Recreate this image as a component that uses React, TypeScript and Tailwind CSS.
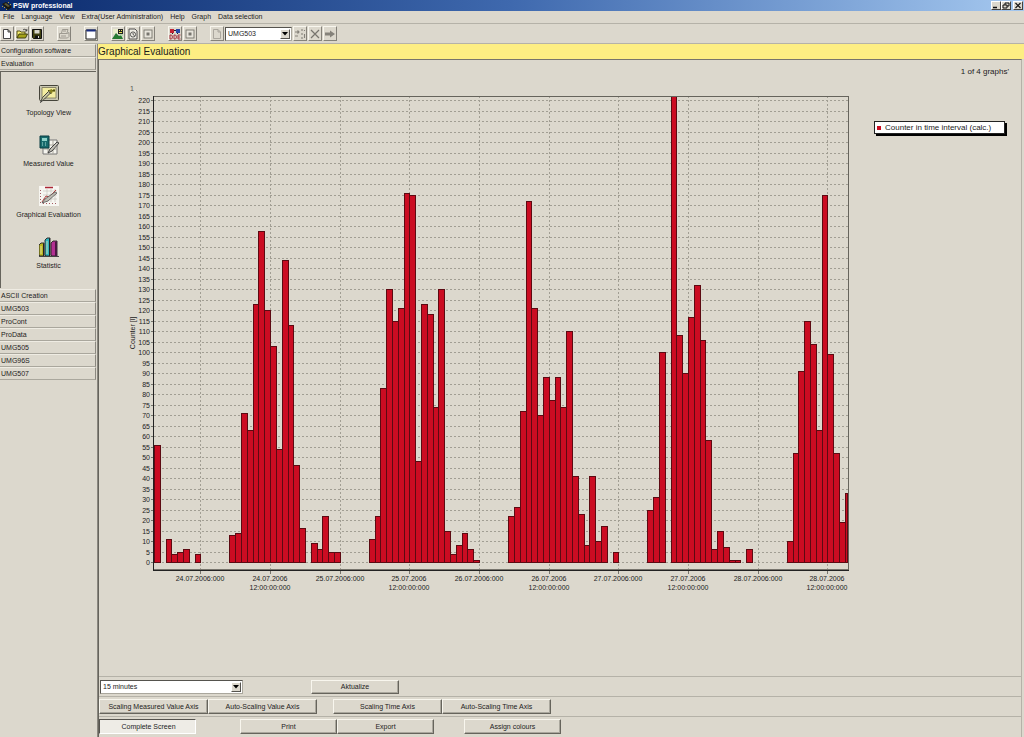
import type { ReactNode } from "react";
import clsx from "clsx";

const menu = ["File", "Language", "View", "Extra(User Administration)", "Help", "Graph", "Data selection"];

const modules = ["ASCII Creation", "UMG503", "ProCont", "ProData", "UMG505", "UMG96S", "UMG507"];

// one value per hour, starting 23.07.2006 16:00
const hourly = [
  56, 0, 11, 4, 5, 6, 0, 4, 0, 0, 0, 0, 0, 13, 14, 71, 63, 123, 158, 120, 103, 54, 144, 113, 46, 16, 0, 9, 6, 22, 5, 5,
  0, 0, 0, 0, 0, 11, 22, 83, 130, 115, 121, 176, 175, 48, 123, 118, 74, 130, 15, 4, 8, 14, 6, 1,
  0, 0, 0, 0, 0, 22, 26, 72, 172, 121, 70, 88, 77, 88, 74, 110, 41, 23, 8, 41, 10, 17, 0, 5,
  0, 0, 0, 0, 0, 25, 31, 100, 0, 222, 108, 90, 117, 132, 106, 58, 6, 15, 7, 1, 1, 0, 6, 0,
  0, 0, 0, 0, 0, 10, 52, 91, 115, 104, 63, 175, 99, 52, 19, 33,
];

const timeTicks = [
  ["24.07.2006:000"],
  ["24.07.2006", "12:00:00:000"],
  ["25.07.2006:000"],
  ["25.07.2006", "12:00:00:000"],
  ["26.07.2006:000"],
  ["26.07.2006", "12:00:00:000"],
  ["27.07.2006:000"],
  ["27.07.2006", "12:00:00:000"],
  ["28.07.2006:000"],
  ["28.07.2006", "12:00:00:000"],
];

const PLOT = { left: 55, right: 749, top: 27, bottom: 501, zero: 493 };
const HOUR = 5.805;

const xAt = (hour: number) => Math.round(PLOT.left + hour * HOUR);
const yAt = (value: number) => Math.round(PLOT.zero - value * 2.098);

function Chart() {
  const steps = Array.from({ length: 45 }, (_, i) => i * 5);

  return (
    <svg viewBox="0 0 760 540" className="block min-w-0 flex-1 self-start" role="img" aria-label="Counter in time interval">
      <g shapeRendering="crispEdges" stroke="#a19e93" strokeDasharray="2 2">
        {steps.map((v) => (
          <line key={v} x1={PLOT.left} x2={PLOT.right} y1={yAt(v) + 0.5} y2={yAt(v) + 0.5} />
        ))}
        {timeTicks.map((_, i) => (
          <line key={i} x1={xAt(8 + i * 12) + 0.5} x2={xAt(8 + i * 12) + 0.5} y1={PLOT.top} y2={PLOT.bottom} />
        ))}
      </g>
      <g shapeRendering="crispEdges" fill="#cb0c22" stroke="#5c0a12">
        {hourly.map((v, i) => {
          if (!v) return null;
          const x = xAt(i);
          const y = yAt(v);
          const right = Math.min(xAt(i + 1), PLOT.right - 1);
          return <rect key={i} x={x + 0.5} y={y + 0.5} width={right - x} height={PLOT.zero - y} />;
        })}
      </g>
      <g shapeRendering="crispEdges" fill="none">
        <path d={`M${PLOT.left} ${PLOT.top + 0.5}H${PLOT.right + 0.5}V${PLOT.bottom}`} stroke="#66645c" />
        <path d={`M${PLOT.left - 0.5} ${PLOT.top}V${PLOT.bottom + 0.5}H${PLOT.right + 1}`} stroke="#222" />
        <path d={`M${PLOT.left} ${PLOT.bottom - 0.5}H${PLOT.right}`} stroke="#77746c" />
        {steps.map((v) => (
          <path key={v} d={`M${PLOT.left - 3} ${yAt(v) + 0.5}h2`} stroke="#77746c" />
        ))}
        {timeTicks.map((_, i) => (
          <path key={i} d={`M${xAt(8 + i * 12) + 0.5} ${PLOT.bottom + 1}v3`} stroke="#77746c" />
        ))}
      </g>
      <g className="text-[7px]" fill="#222">
        {steps.map((v) => (
          <text key={v} x={51} y={yAt(v) + 3} textAnchor="end">
            {v}
          </text>
        ))}
        {timeTicks.map((lines, i) =>
          lines.map((line, n) => (
            <text key={line} x={xAt(8 + i * 12)} y={512 + n * 9} textAnchor="middle">
              {line}
            </text>
          ))
        )}
        <text x={31} y={22} fill="#55534e">
          1
        </text>
        <text transform="translate(36 264) rotate(-90)" textAnchor="middle">
          Counter [l]
        </text>
      </g>
    </svg>
  );
}

function Glyph({ children }: { children: ReactNode }) {
  return (
    <svg viewBox="0 0 12 12" className="h-3 w-3" fill="none" aria-hidden="true">
      {children}
    </svg>
  );
}

function Tool({ label, children }: { label: string; children: ReactNode }) {
  return (
    <button
      type="button"
      aria-label={label}
      className="flex h-[15px] w-[14px] items-center justify-center border border-t-[#f8f6ee] border-r-[#85827a] border-b-[#85827a] border-l-[#f8f6ee]"
    >
      <Glyph>{children}</Glyph>
    </button>
  );
}

const pageShape = <path d="M2.500 1.500h4.500l2.500 2.500v6.500h-7zM7 1.500V4h2.500" fill="#fff" stroke="#333" strokeWidth=".9" />;
const greyPage = <path d="M2.500 1.500h4.500l2.500 2.500v6.500h-7zM7 1.500V4h2.500" stroke="#a5a299" strokeWidth=".9" />;
const stopShape = (
  <>
    <rect x="2" y="2" width="8" height="8" fill="#e7e4db" stroke="#77756e" strokeWidth=".9" />
    <rect x="4.500" y="4.500" width="3" height="3" fill="#77756e" />
  </>
);

function Toolbar() {
  return (
    <div className="flex h-[21px] items-center gap-[13px] border-t border-b border-t-[#b5b2a8] border-b-[#b5b2a8]">
      <div className="flex gap-px">
        <Tool label="New">{pageShape}</Tool>
        <Tool label="Open">
          <path d="M1 10V3h3l1 1h4v2" fill="#f4ec70" stroke="#45440c" strokeWidth=".9" />
          <path d="M1 10l2-4h8.500l-2 4z" fill="#a5a31b" stroke="#34340a" strokeWidth=".9" />
          <path d="M7 2c1-1 2.500-1 3.500.5M10.800 1v2H9" stroke="#222" strokeWidth=".8" />
        </Tool>
        <Tool label="Save">
          <path d="M1.500 1.500h9v9h-8l-1-1z" fill="#3f400f" stroke="#111" />
          <path d="M3.500 2h5v3.500h-5z" fill="#d8d6cc" />
          <path d="M4 7.500h4.500V10H4z" fill="#111" />
          <path d="M7 8h1v2H7z" fill="#ddd" />
        </Tool>
      </div>
      <Tool label="Print">
        <path d="M3.500 5l1-3.500H10L9 5M1.500 5.500h8l1.500-1v4L9.500 10h-8zM3 8h5M5 3h3" stroke="#96938a" strokeWidth=".9" />
      </Tool>
      <Tool label="Window">
        <path d="M1 2h10v9H1z" fill="#fff" stroke="#222" />
        <path d="M1.500 1.500h9v2h-9z" fill="#1a2d80" />
      </Tool>
      <div className="flex gap-px">
        <Tool label="Topology">
          <path d="M1 1h5v5H1z" fill="#e9eccb" />
          <path d="M6 1h5v5H6z" fill="#222" />
          <path d="M7 2h1v1H7zM9 2h1v1H9zM7 4h3v1H7z" fill="#e8e45a" />
          <path d="M0 11l4-6 3 3 2-1 2 4z" fill="#257a31" />
          <path d="M7 6h4v2H9z" fill="#b9d6b0" />
        </Tool>
        <Tool label="Schedule">
          <path d="M2 1h6l2 2v8H2z" fill="#eeece4" stroke="#444" strokeWidth=".9" />
          <circle cx="6" cy="6.500" r="2.600" stroke="#333" strokeWidth=".8" />
          <path d="M6 5v1.500l1.500 1" stroke="#333" strokeWidth=".8" />
        </Tool>
        <Tool label="Stop">{stopShape}</Tool>
      </div>
      <div className="flex gap-px">
        <Tool label="DDE">
          <path d="M1 1h4v4H1z" fill="#c32335" />
          <path d="M7 1h4v4H7z" fill="#2a48a8" />
          <path d="M5 2h2v1H5zM3 5h1v1H3zM8 5h1v1H8z" fill="#222" />
          <path d="M1 7v4h1.500l.8-1V8l-.8-1zM5 7v4h1.500l.8-1V8l-.8-1zM11.500 7H9v4h2.500M9 9h2" stroke="#a12030" strokeWidth=".9" />
        </Tool>
        <Tool label="Stop DDE">{stopShape}</Tool>
      </div>
      <div className="flex items-center gap-px">
        <Tool label="Page">{greyPage}</Tool>
        <Dropdown label="Device" value="UMG503" className="w-[67px]" />
        <Tool label="Transfer">
          <path d="M1 4h4M3.500 2.500L5 4 3.500 5.500M1 8h3M8 1v2M8 5v2M8 9v2M10.500 2v1M10.500 6v4" stroke="#85827a" strokeWidth="1.100" />
        </Tool>
        <Tool label="Cancel">
          <path d="M2 2l8 8M10 2l-8 8" stroke="#77756e" strokeWidth="1.200" />
        </Tool>
        <Tool label="Forward">
          <path d="M1 4.500h5V2.500L11 6 6 9.500v-2H1z" fill="#85827a" />
        </Tool>
      </div>
    </div>
  );
}

function Dropdown({ label, value, className }: { label: string; value: string; className: string }) {
  return (
    <div className={clsx("relative h-[14px]", className)}>
      <select
        aria-label={label}
        className="block h-full w-full appearance-none border border-t-[#55534e] border-r-[#aaa79d] border-b-[#aaa79d] border-l-[#55534e] bg-white pl-0.5 text-[7px] leading-3"
      >
        <option>{value}</option>
      </select>
      <span className="pointer-events-none absolute top-0.5 right-0.5 flex h-2.5 w-2.5 items-center justify-center border border-t-white border-r-[#55534e] border-b-[#55534e] border-l-white bg-[#dcd8cd]">
        <svg viewBox="0 0 6 4" className="h-1 w-1.5" aria-hidden="true">
          <path d="M0 0h6L3 3.500z" fill="#000" />
        </svg>
      </span>
    </div>
  );
}

function SideHeader({ children }: { children: ReactNode }) {
  return (
    <button
      type="button"
      className="block h-[13px] w-full border-t border-r border-b border-t-[#efece3] border-r-[#8b8880] border-b-[#aaa79d] pl-px text-left text-[7px] leading-[11px]"
    >
      {children}
    </button>
  );
}

const views = [
  {
    label: "Topology View",
    icon: (
      <>
        <rect x=".5" y="1.500" width="19" height="15" rx="1" fill="#c9c6b0" stroke="#45443a" />
        <path d="M3 3.500h14v10.500H3z" fill="#f3eda0" stroke="#77745a" strokeWidth=".8" />
        <path d="M9 6.500h7M8 9h5M15 5v3" stroke="#55520f" strokeWidth="1.200" />
        <path d="M10 6l3-1 1 3-3 2z" fill="#8a8420" />
        <path d="M1.500 18.500l2-5 6-6 2 1.500-6 6z" fill="#c9c7a0" stroke="#333" strokeWidth=".9" />
      </>
    ),
  },
  {
    label: "Measured Value",
    icon: (
      <>
        <path d="M4 5h14v14H4z" fill="#f5f4ee" stroke="#777" />
        <path d="M4 10h14M4 14h14M9 5v14M14 5v14" stroke="#aaa79d" />
        <path d="M1 1h9v12H1z" fill="#176a6c" stroke="#0b3c40" />
        <path d="M3 3h5v3H3z" fill="#8fd2c9" />
        <path d="M3 8h1M6 8h1M3 10h1M6 10h1" stroke="#a9dcd6" />
        <path d="M9 18l2-4 7-7 2 1-7 8z" fill="#c2c0b7" stroke="#333" strokeWidth=".9" />
      </>
    ),
  },
  {
    label: "Graphical Evaluation",
    icon: (
      <>
        <path d="M0 0h20v20H0z" fill="#f7f6f1" />
        <path d="M6 1.500h8" stroke="#ab2635" strokeWidth="1.500" />
        <path d="M4 5h14M4 9h14M4 13h14M8 3v13M12 3v13M16 3v13" stroke="#c7c5bd" strokeWidth=".7" />
        <path d="M1.500 4v13M4 17.500h14" stroke="#a45b62" strokeDasharray="1 2" />
        <path d="M3 16l4-6 3 1 7-7" stroke="#b8403e" />
        <path d="M3 17l3-4 10-7 2 1-9 8z" fill="#bebcb2" stroke="#555" strokeWidth=".8" />
      </>
    ),
  },
  {
    label: "Statistic",
    icon: (
      <>
        <path d="M0 8l2-2h3v13H1L0 18z" fill="#b9b520" stroke="#222" strokeWidth=".9" />
        <path d="M6 3l2-2h3v18H7l-1-1z" fill="#30b3bd" stroke="#222" strokeWidth=".9" />
        <path d="M4 7l1-1v13H4zM10 2l1-1v18h-1z" fill="#222" />
        <path d="M12 6l2-2h4v15h-5l-1-1z" fill="#b22f91" stroke="#222" strokeWidth=".9" />
        <path d="M16 5l2-1v15h-2z" fill="#4a1842" />
        <path d="M0 19.500h20" stroke="#444" />
        <path d="M2 9v8M8 4v13" stroke="#e9e8b7" strokeWidth=".8" />
      </>
    ),
  },
];

function Sidebar() {
  return (
    <aside className="w-[96px] shrink-0">
      <SideHeader>Configuration software</SideHeader>
      <SideHeader>Evaluation</SideHeader>
      <nav className="my-px flex h-[217px] flex-col border-t border-l border-t-[#66645c] border-l-[#66645c] pt-3">
        {views.map((view) => (
          <button key={view.label} type="button" className="flex h-[51px] flex-col items-center gap-1 text-[7px] leading-[10px]">
            <svg viewBox="0 0 20 20" className="h-5 w-5" fill="none" aria-hidden="true">
              {view.icon}
            </svg>
            {view.label}
          </button>
        ))}
      </nav>
      {modules.map((name) => (
        <SideHeader key={name}>{name}</SideHeader>
      ))}
    </aside>
  );
}

function PushButton({ children, wide, pressed }: { children: ReactNode; wide?: boolean; pressed?: boolean }) {
  return (
    <button
      type="button"
      aria-pressed={pressed}
      className={clsx(
        "h-[15px] border text-[7px] leading-3",
        wide ? "w-[109px]" : "w-[97px]",
        pressed
          ? "border-t-[#55534e] border-r-white border-b-white border-l-[#55534e] bg-[#eeece6] pl-0.5"
          : "border-t-[#f8f6ee] border-r-[#66645c] border-b-[#66645c] border-l-[#f8f6ee] shadow-[inset_-1px_-1px_0_#aaa79d]"
      )}
    >
      {children}
    </button>
  );
}

function Controls() {
  return (
    <footer className="pb-px">
      <div className="flex h-5 items-center gap-[68px] border-t border-[#b5b2a8] pl-px">
        <Dropdown label="Interval" value="15 minutes" className="w-[143px]" />
        <button
          type="button"
          className="h-[14px] w-[88px] border border-t-[#f8f6ee] border-r-[#66645c] border-b-[#66645c] border-l-[#f8f6ee] text-[7px] leading-3 shadow-[inset_-1px_-1px_0_#aaa79d]"
        >
          Aktualize
        </button>
      </div>
      <div className="flex h-5 items-center gap-4 border-t border-[#b5b2a8]">
        <div className="flex">
          <PushButton wide>Scaling Measured Value Axis</PushButton>
          <PushButton wide>Auto-Scaling Value Axis</PushButton>
        </div>
        <div className="flex">
          <PushButton wide>Scaling Time Axis</PushButton>
          <PushButton wide>Auto-Scaling Time Axis</PushButton>
        </div>
      </div>
      <div className="flex h-5 items-center border-t border-[#b5b2a8]">
        <PushButton pressed>Complete Screen</PushButton>
        <div className="mr-[30px] ml-11 flex">
          <PushButton>Print</PushButton>
          <PushButton>Export</PushButton>
        </div>
        <PushButton>Assign colours</PushButton>
      </div>
    </footer>
  );
}

function WindowButton({ label, children }: { label: string; children: ReactNode }) {
  return (
    <button
      type="button"
      aria-label={label}
      className="flex h-[9px] w-[10px] items-center justify-center border border-t-white border-r-[#44423e] border-b-[#44423e] border-l-white bg-[#dcd8cd]"
    >
      <svg viewBox="0 0 8 7" className="h-[7px] w-2" fill="none" stroke="#111" aria-hidden="true">
        {children}
      </svg>
    </button>
  );
}

export default function App() {
  return (
    <div className="flex min-h-screen flex-col bg-[#dcd8cd] font-['Liberation_Sans',Arial,sans-serif] text-[#1c1c1c]">
      <header>
        <div className="flex h-[11px] items-center bg-linear-to-r from-[#0b2a6d] via-[#3f69ae] to-[#a5c8ef] pr-px pl-px">
          <svg viewBox="0 0 12 10" className="h-2.5 w-3" aria-hidden="true">
            <path d="M1 3l4-2 6 5-4 3z" fill="#18180f" />
            <path d="M3 3l2-1 4 3-2 1z" fill="#5a563a" />
            <path d="M1 5l1 1M3 6l1 1M5 8l1 1M7 1l1 1M9 3l1 1" stroke="#b59c42" />
          </svg>
          <h1 className="flex-1 text-[7px] leading-[10px] font-bold text-white">PSW professional</h1>
          <WindowButton label="Minimize">
            <path d="M1 5.500h4" strokeWidth="1.500" />
          </WindowButton>
          <WindowButton label="Restore">
            <path d="M3 3V1h4v3H5M1 3h4v3H1z" />
          </WindowButton>
          <div className="ml-0.5 flex">
            <WindowButton label="Close">
              <path d="M1.500 1l5 5M6.500 1l-5 5" strokeWidth="1.200" />
            </WindowButton>
          </div>
        </div>
        <nav className="flex h-3 items-center gap-[7px] pl-[3px] text-[7px] leading-3">
          {menu.map((item) => (
            <button key={item} type="button">
              {item}
            </button>
          ))}
        </nav>
        <Toolbar />
      </header>
      <div className="flex flex-1">
        <Sidebar />
        <main className="ml-px flex min-w-0 flex-1 flex-col border-l border-[#8b8880]">
          <h2 className="h-[15px] bg-[#fdee83] text-[10px] leading-4">Graphical Evaluation</h2>
          <div className="mr-0.5 flex flex-1 flex-col border-t border-r border-l border-t-[#77746c] border-r-[#b5b2a8] border-l-[#66645c]">
            <section className="flex flex-1 pt-[9px]">
              <Chart />
              <div className="-mt-px w-[162px] shrink-0">
                <p className="mr-3 text-right text-[8px] leading-none">1 of 4 graphs'</p>
                <div className="mt-[45px] ml-[15px] flex h-[13px] w-[131px] items-center gap-1 border border-[#222] bg-white pl-0.5 text-[8px] leading-none shadow-[2px_2px_0_#000]">
                  <span className="h-1 w-1 bg-[#cb0c22]" />
                  Counter in time interval (calc.)
                </div>
              </div>
            </section>
            <Controls />
          </div>
        </main>
      </div>
    </div>
  );
}
